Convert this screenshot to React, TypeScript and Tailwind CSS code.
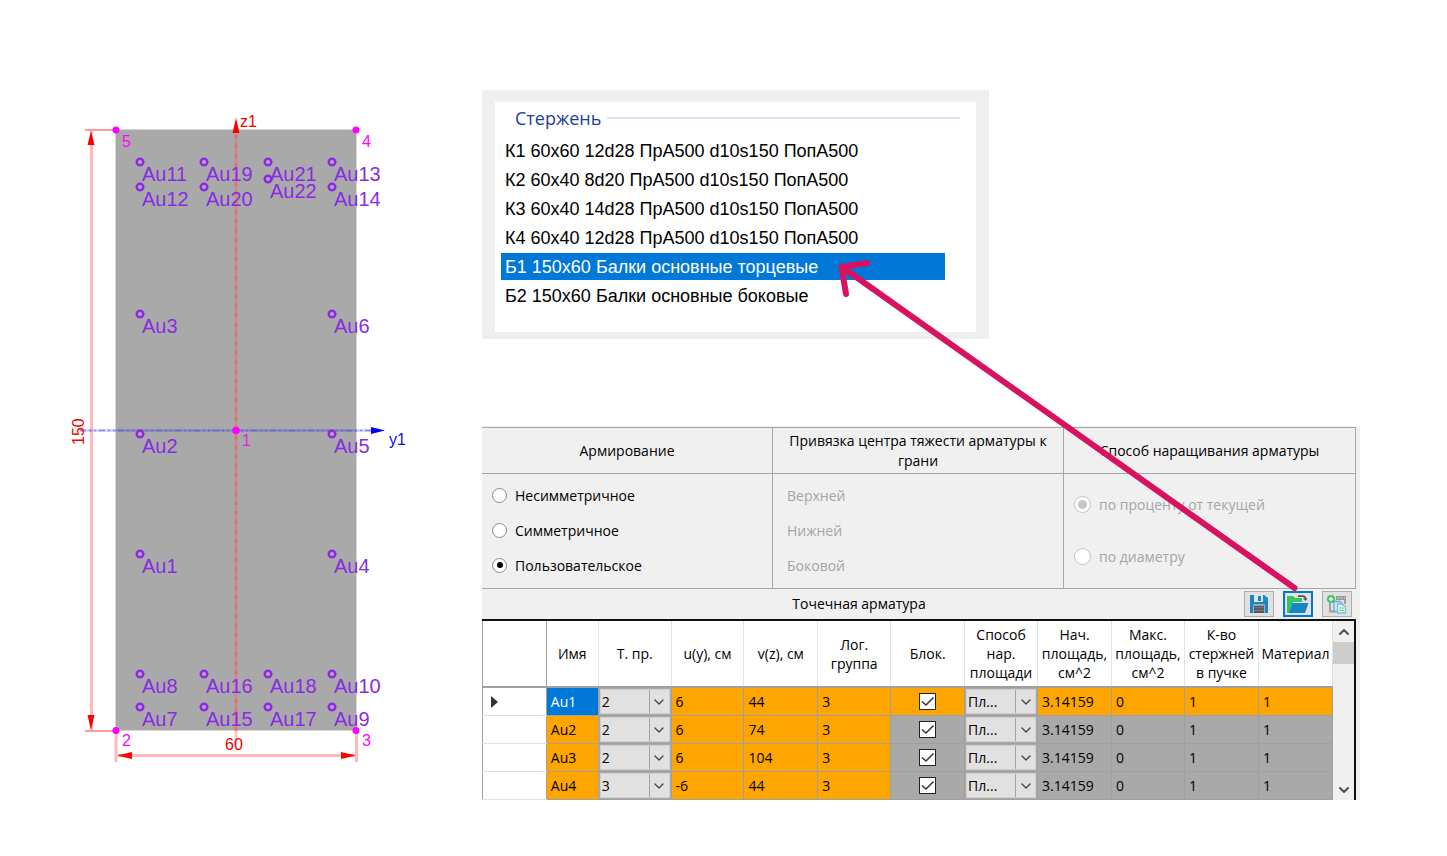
import { useState } from "react";
import { ChevronDown, ChevronUp } from "lucide-react";

const bars: { name: string; x: number; y: number }[] = [
  { name: "Au11", x: 140, y: 162 },
  { name: "Au19", x: 204, y: 162 },
  { name: "Au21", x: 268, y: 162 },
  { name: "Au13", x: 332, y: 162 },
  { name: "Au12", x: 140, y: 187 },
  { name: "Au20", x: 204, y: 187 },
  { name: "Au22", x: 268, y: 179 },
  { name: "Au14", x: 332, y: 187 },
  { name: "Au3", x: 140, y: 314 },
  { name: "Au6", x: 332, y: 314 },
  { name: "Au2", x: 140, y: 434 },
  { name: "Au5", x: 332, y: 434 },
  { name: "Au1", x: 140, y: 554 },
  { name: "Au4", x: 332, y: 554 },
  { name: "Au8", x: 140, y: 674 },
  { name: "Au16", x: 204, y: 674 },
  { name: "Au18", x: 268, y: 674 },
  { name: "Au10", x: 332, y: 674 },
  { name: "Au7", x: 140, y: 707 },
  { name: "Au15", x: 204, y: 707 },
  { name: "Au17", x: 268, y: 707 },
  { name: "Au9", x: 332, y: 707 },
];

function SectionDrawing() {
  return (
    <svg
      viewBox="64 106 352 664"
      className="h-[664px] w-[352px] shrink-0 font-['Liberation_Sans',Arial,sans-serif]"
      role="img"
      aria-label="Сечение 60 x 150"
    >
      <rect x="115.5" y="129.5" width="241" height="601" fill="#a9a9a9" stroke="#d6d6d6" />

      <g stroke="#ffb9b9" strokeWidth="3">
        <path d="M91.5 131V731M118 755.5H355" />
        <path d="M116 731V762M356.5 731V762" />
      </g>
      <g stroke="#ff9a9a" strokeWidth="2">
        <path d="M85 130H114M85 731H114" />
      </g>
      <g fill="#ff0000">
        <path d="M91 131l3.5 14h-7zM91 730l3.5-15h-7zM117 755.500l15-3.500v7zM356 755.500l-15-3.500v7z" />
        <path d="M236 118l3.500 15h-7z" />
      </g>
      <path d="M236 133V744" stroke="#ff5050" strokeOpacity="0.3" strokeWidth="3" />
      <path d="M236 135V731" stroke="#f06464" strokeOpacity="0.8" strokeWidth="2.500" strokeDasharray="3.500 5.900" />
      <path d="M80 430.500H372" stroke="#0000ff" strokeOpacity="0.2" strokeWidth="2.500" />
      <path
        d="M80 430.500H372"
        stroke="#4a4ae8"
        strokeOpacity="0.55"
        strokeWidth="1.500"
        strokeDasharray="6 3 2 3 2 3"
      />
      <path d="M385 430.500l-14-3.500v7z" fill="#0000ff" />

      <g fill="#8a2be2" fontSize="20">
        {bars.map((b) => (
          <g key={b.name}>
            <circle cx={b.x} cy={b.y} r="3.300" fill="#b9a0d0" stroke="#8a2be2" strokeWidth="2.400" />
            <text x={b.x + 2} y={b.y + 19}>{b.name}</text>
          </g>
        ))}
      </g>

      <g fill="#ff00ff" fontSize="16">
        <circle cx="116" cy="130" r="3.500" />
        <circle cx="356" cy="130" r="3.500" />
        <circle cx="116" cy="730.500" r="3.500" />
        <circle cx="356" cy="730.500" r="3.500" />
        <circle cx="236" cy="430.500" r="3.800" />
        <text x="122" y="147">5</text>
        <text x="362" y="147">4</text>
        <text x="242" y="446" fill="#e61ee0">1</text>
        <text x="122" y="746">2</text>
        <text x="362" y="746">3</text>
      </g>
      <g fill="#f00000" fontSize="16">
        <text x="240" y="127">z1</text>
        <text x="225" y="750">60</text>
        <text transform="translate(84 445) rotate(-90)">150</text>
      </g>
      <text x="389" y="445" fontSize="16" fill="#1010e0">y1</text>
    </svg>
  );
}

const members = [
  "К1 60x60 12d28 ПрА500 d10s150 ПопА500",
  "К2 60x40 8d20 ПрА500 d10s150 ПопА500",
  "К3 60x40 14d28 ПрА500 d10s150 ПопА500",
  "К4 60x40 12d28 ПрА500 d10s150 ПопА500",
  "Б1 150x60 Балки основные торцевые",
  "Б2 150x60 Балки основные боковые",
];

function MemberList() {
  const [selected, setSelected] = useState(4);
  return (
    <section className="w-full max-w-[507px] bg-[#efefef] px-[13px] pt-3 pb-[7px]">
      <div className="bg-white pb-[23px]">
        <div className="flex h-[35px] items-center gap-[6px] pr-4 pb-1 pl-5">
          <h2 className="text-[18px] leading-6 text-[#1b3f94]">Стержень</h2>
          <div className="h-[2px] flex-1 bg-[#dbe5f2]" />
        </div>
        <ul className="flex flex-col gap-[2px] pr-[31px] pl-[6px]">
          {members.map((m, i) => (
            <li key={m}>
              <button
                type="button"
                onClick={() => setSelected(i)}
                className={
                  "block h-[27px] w-full pl-1 text-left font-['Liberation_Sans',Arial,sans-serif] text-[18px] leading-7 whitespace-nowrap " +
                  (i === selected ? "bg-[#0078d7] text-white" : "text-black")
                }
              >
                {m}
              </button>
            </li>
          ))}
        </ul>
      </div>
    </section>
  );
}

const kinds = ["Несимметричное", "Симметричное", "Пользовательское"];
const faces = ["Верхней", "Нижней", "Боковой"];

function Options() {
  const [kind, setKind] = useState(2);
  const head = "flex h-[45px] items-center justify-center px-2 text-center leading-5";
  return (
    <div className="grid grid-cols-3 divide-x divide-[#a6a6a6] border-y border-r border-[#a6a6a6]">
      <fieldset>
        <legend className="float-left w-full">
          <span className={head}>Армирование</span>
        </legend>
        <div className="clear-both flex h-[115px] flex-col gap-[15px] border-t border-[#a6a6a6] pt-[11px] pl-[10px]">
          {kinds.map((k, i) => (
            <label key={k} className="flex h-5 items-center gap-2">
              <input
                type="radio"
                name="kind"
                checked={kind === i}
                onChange={() => setKind(i)}
                className="grid size-[15px] appearance-none place-items-center rounded-full border border-[#8c8c8c] bg-white checked:before:size-[6px] checked:before:rounded-full checked:before:bg-black checked:before:content-['']"
              />
              {k}
            </label>
          ))}
        </div>
      </fieldset>
      <div>
        <div className={head}>Привязка центра тяжести арматуры к грани</div>
        <div className="flex h-[115px] flex-col gap-[15px] border-t border-[#a6a6a6] pt-3 pl-[14px] text-[#a5a5a5]">
          {faces.map((f) => (
            <span key={f} className="h-5 leading-5">{f}</span>
          ))}
        </div>
      </div>
      <fieldset disabled>
        <legend className="float-left w-full">
          <span className={head}>Способ наращивания арматуры</span>
        </legend>
        <div className="clear-both flex h-[115px] flex-col gap-8 border-t border-[#a6a6a6] pt-5 pl-[10px] text-[#a5a5a5]">
          {["по проценту от текущей", "по диаметру"].map((t, i) => (
            <label key={t} className="flex h-5 items-center gap-2">
              <input
                type="radio"
                name="growth"
                defaultChecked={i === 0}
                className="grid size-[17px] appearance-none place-items-center rounded-full border border-[#c3c3c3] bg-white checked:before:size-[9px] checked:before:rounded-full checked:before:bg-[#c6c6c6] checked:before:content-['']"
              />
              {t}
            </label>
          ))}
        </div>
      </fieldset>
    </div>
  );
}

function SaveIcon() {
  return (
    <svg viewBox="0 0 20 18" className="h-[18px] w-5" aria-hidden="true">
      <path d="M1 0H5V7H14V0H15L19 3V18H1Z" fill="#1a86c2" />
      <path d="M9 1H12V6H9Z" fill="#1a86c2" />
      <path d="M4.500 9.500H15.500V18H4.500Z" fill="#e6e6e6" />
      <path d="M5 10.500H15V18H5Z" fill="#555" />
      <path d="M5 12.800H15M5 15.500H15" stroke="#8f8f8f" strokeWidth="0.800" />
    </svg>
  );
}

function OpenIcon() {
  return (
    <svg viewBox="0 0 22 18" className="h-[18px] w-[22px]" aria-hidden="true">
      <path d="M0 1H6L8 3H15V7H6L3 18H0Z" fill="#37c463" />
      <path d="M5.500 8H21.500L18 18H2Z" fill="#1787c4" />
      <path d="M11 1.200H16Q18.500 1.500 18.500 4" fill="none" stroke="#555" strokeWidth="1.800" />
      <path d="M16 3.500H20.500L18.500 6Z" fill="#555" />
    </svg>
  );
}

function TemplateIcon() {
  return (
    <svg viewBox="0 0 20 19" className="h-[19px] w-5" aria-hidden="true">
      <path d="M3 8V16.500H8M18 4V9" fill="none" stroke="#a0a0a0" strokeWidth="2" />
      <path d="M9 1H19V5H9Z" fill="#999" />
      <path d="M11 3H12.500M14 3H15.500M17 3H18" stroke="#eee" />
      <path d="M7 6.500H13L16 9.500V16.500H7Z" fill="#d3eaf8" stroke="#5fa9d8" strokeWidth="1.300" />
      <path d="M10.500 9H15L18.500 12V18H10.500Z" fill="#e5f6ec" stroke="#74bfdc" strokeWidth="1.300" />
      <path d="M12 13H17M12 15.500H17" stroke="#6ccf8c" strokeWidth="1.200" />
      <circle cx="4" cy="4" r="4" fill="#3cc667" />
      <path d="M4 1.800V6.200M1.800 4H6.200" stroke="#fff" strokeWidth="1.400" />
    </svg>
  );
}

function Combo({ label, value, options }: { label: string; value: string; options: string[] }) {
  return (
    <div className="m-px grid h-[25px] grid-cols-[minmax(0,1fr)_20px] items-center border border-[#cfcfcf] bg-[#e1e1e1]">
      <select
        aria-label={label}
        defaultValue={value}
        className="col-span-2 col-start-1 row-start-1 h-full w-full appearance-none truncate bg-transparent pr-5 pl-px"
      >
        {options.map((o) => (
          <option key={o}>{o}</option>
        ))}
      </select>
      <span className="pointer-events-none col-start-2 row-start-1 grid h-full place-items-center border-l border-[#a3a3a3]">
        <ChevronDown className="size-4 text-[#444]" strokeWidth={2} />
      </span>
    </div>
  );
}

function Check({ label }: { label: string }) {
  return (
    <span className="mx-auto grid size-[17px]">
      <input
        type="checkbox"
        aria-label={label}
        defaultChecked
        className="peer col-start-1 row-start-1 size-[17px] appearance-none border border-[#222] bg-white"
      />
      <svg
        viewBox="0 0 17 17"
        className="pointer-events-none invisible col-start-1 row-start-1 peer-checked:visible"
        aria-hidden="true"
      >
        <path d="M3 8.500L7 12L14.500 4.500" fill="none" stroke="#333" strokeWidth="1.500" />
      </svg>
    </span>
  );
}

const columns = [
  "Имя",
  "Т. пр.",
  "u(y), см",
  "v(z), см",
  "Лог. группа",
  "Блок.",
  "Способ нар. площади",
  "Нач. площадь, см^2",
  "Макс. площадь, см^2",
  "К-во стержней в пучке",
  "Материал",
];

const rows = [
  { name: "Au1", type: "2", u: "6", v: "44" },
  { name: "Au2", type: "2", u: "6", v: "74" },
  { name: "Au3", type: "2", u: "6", v: "104" },
  { name: "Au4", type: "3", u: "-6", v: "44" },
];

function RebarGrid() {
  return (
    <div className="flex border-t-2 border-r-2 border-t-[#111] border-r-[#111] bg-white">
      <table className="min-w-0 flex-1 table-fixed border-collapse">
        <colgroup>
          <col className="w-[64px]" />
          <col className="w-[52px]" />
          <col className="w-[73px]" />
          <col className="w-[73px]" />
          <col className="w-[74px]" />
          <col className="w-[73px]" />
          <col className="w-[74px]" />
          <col className="w-[73px]" />
          <col className="w-[74px]" />
          <col className="w-[73px]" />
          <col className="w-[74px]" />
          <col className="w-[74px]" />
        </colgroup>
        <thead>
          <tr className="h-[66px] border-b-2 border-[#a0a0a0]">
            <th className="border-x border-[#a0a0a0] p-0" aria-label="Строка" />
            {columns.map((c) => (
              <th key={c} className="border-r border-[#e2e2e2] p-0 leading-[19px] font-normal">
                {c}
              </th>
            ))}
          </tr>
        </thead>
        <tbody>
          {rows.map((r, i) => {
            const cell = "border border-[#a0a0a0] px-1 py-0 ";
            const rest = cell + (i === 0 ? "bg-[#ffa500]" : "bg-[#a9a9a9]");
            const edit = cell + "bg-[#ffa500]";
            return (
              <tr key={r.name} className="h-[28px]">
                <td className="border-x border-b border-x-[#a0a0a0] border-b-[#e2e2e2] py-0 pl-2">
                  {i === 0 && (
                    <svg viewBox="0 0 7 12" className="h-3 w-[7px]" aria-hidden="true">
                      <path d="M0 0L7 6L0 12Z" fill="#333" />
                    </svg>
                  )}
                </td>
                <td className={cell + (i === 0 ? "bg-[#0078d7] text-white" : "bg-[#ffa500]")}>{r.name}</td>
                <td className="border border-[#a0a0a0] bg-[#a9a9a9] p-0">
                  <Combo label={"Т. пр. " + r.name} value={r.type} options={["2", "3"]} />
                </td>
                <td className={edit}>{r.u}</td>
                <td className={edit}>{r.v}</td>
                <td className={edit}>3</td>
                <td className={rest}>
                  <Check label={"Блок. " + r.name} />
                </td>
                <td className="border border-[#a0a0a0] bg-[#a9a9a9] p-0">
                  <Combo label={"Способ нар. площади " + r.name} value="Пл..." options={["Пл..."]} />
                </td>
                <td className={rest}>3.14159</td>
                <td className={rest}>0</td>
                <td className={rest}>1</td>
                <td className={rest}>1</td>
              </tr>
            );
          })}
        </tbody>
      </table>
      <div className="flex w-[21px] shrink-0 flex-col items-center bg-[#f0f0f0]">
        <button type="button" aria-label="Вверх" className="grid h-[21px] w-full place-items-center">
          <ChevronUp className="size-4 text-[#505050]" strokeWidth={3} />
        </button>
        <div className="h-[22px] w-full bg-[#cdcdcd]" />
        <button type="button" aria-label="Вниз" className="mt-auto grid h-[20px] w-full place-items-center">
          <ChevronDown className="size-4 text-[#505050]" strokeWidth={3} />
        </button>
      </div>
    </div>
  );
}

function RebarPanel() {
  const tool = "grid h-[26px] w-[30px] place-items-center bg-[#e1e1e1] ";
  return (
    <section className="bg-[#f0f0f0] pt-px pr-1 text-[14px] text-black">
      <Options />
      <div className="flex h-[30px] items-center pr-1">
        <h3 className="flex-1 pb-[2px] text-center">Точечная арматура</h3>
        <div className="flex gap-[9px] pl-2">
          <button type="button" aria-label="Сохранить" className={tool + "border border-[#adadad]"}>
            <SaveIcon />
          </button>
          <button type="button" aria-label="Открыть" className={tool + "border-2 border-[#0078d7]"}>
            <OpenIcon />
          </button>
          <button type="button" aria-label="Добавить из шаблона" className={tool + "border border-[#adadad]"}>
            <TemplateIcon />
          </button>
        </div>
      </div>
      <RebarGrid />
    </section>
  );
}

export default function App() {
  return (
    <main className="flex min-h-screen items-start gap-[66px] bg-white pr-[87px] pb-14 pl-16 font-['Open_Sans','Noto_Sans',sans-serif]">
      <div className="pt-[106px]">
        <SectionDrawing />
      </div>
      <div className="relative flex max-w-[878px] min-w-0 flex-1 flex-col gap-[87px] pt-[90px]">
        <MemberList />
        <RebarPanel />
        <svg
          viewBox="482 0 878 799"
          className="pointer-events-none absolute top-0 left-0 h-[799px] w-[878px]"
          aria-hidden="true"
        >
          <g fill="none" stroke="#d81160" strokeWidth="6" strokeLinecap="round" strokeLinejoin="round">
            <path d="M1294.500 588L842 267" />
            <path d="M867.500 263L841.500 267L846 294" />
          </g>
        </svg>
      </div>
    </main>
  );
}
